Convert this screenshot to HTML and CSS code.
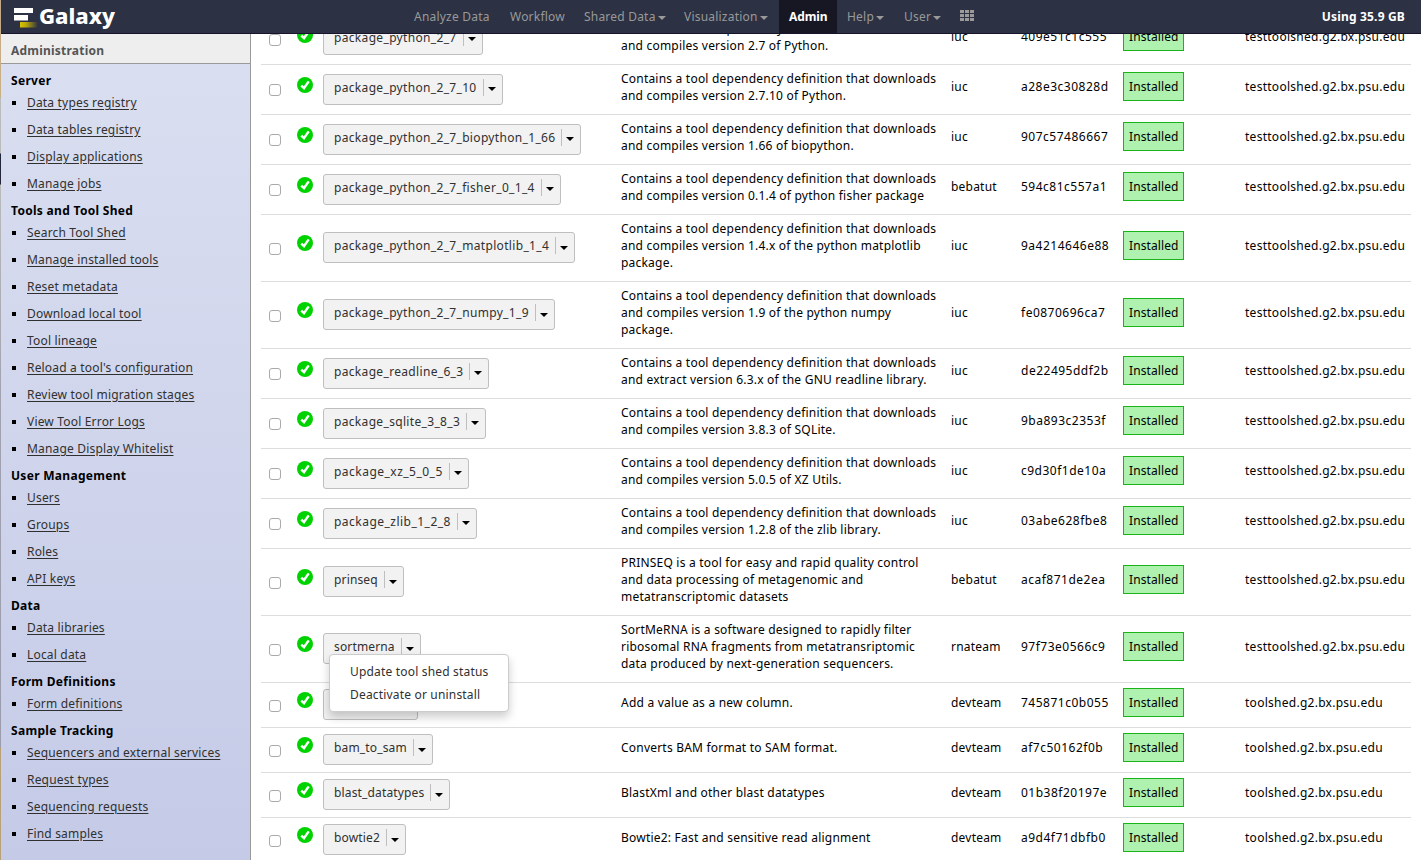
FILE: index.html
```html
<!DOCTYPE html>
<html lang="en">
<head>
<meta charset="utf-8">
<title>Galaxy</title>
<link rel="stylesheet" href="styles.css">
</head>
<body>
<svg class="defs" width="0" height="0">
  <symbol id="ok" viewBox="0 0 16 16"><circle cx="8" cy="8" r="8" fill="#00d200"/><path d="M4.3 8.6 7 11.2 11.7 4.4" fill="none" stroke="#fff" stroke-width="2.5"/></symbol>
</svg>
<header class="masthead">
  <div class="brand">
    <svg width="24" height="20" viewBox="0 0 24 20">
      <defs><linearGradient id="gold"><stop offset="0" stop-color="#d9c400"/><stop offset=".35" stop-color="#b8a60c"/><stop offset="1" stop-color="#2c3143"/></linearGradient></defs>
      <rect width="19" height="5" fill="#fff"/><rect y="7" width="14" height="5.500" fill="#fff"/><rect x="6" y="14" width="18" height="5.500" fill="url(#gold)"/>
    </svg>
    <span class="brand-name">Galaxy</span>
  </div>
  <nav class="nav">
    <a>Analyze Data</a><a>Workflow</a><a>Shared Data<i class="caret"></i></a><a>Visualization<i class="caret"></i></a><a class="active">Admin</a><a>Help<i class="caret"></i></a><a>User<i class="caret"></i></a>
    <a><svg width="14" height="11" viewBox="0 0 14 11" fill="#999"><path d="M0 0h4v3H0zM5 0h4v3H5zM10 0h4v3h-4zM0 4h4v3H0zM5 4h4v3H5zM10 4h4v3h-4zM0 8h4v3H0zM5 8h4v3H5zM10 8h4v3h-4z"/></svg></a>
  </nav>
  <div class="quota">Using 35.9 GB</div>
</header>
<div class="page">
  <aside class="sidebar">
    <div class="panel-head">Administration</div>
    <div class="panel-body">
      <h2>Server</h2>
      <ul><li><a>Data types registry</a></li><li><a>Data tables registry</a></li><li><a>Display applications</a></li><li><a>Manage jobs</a></li></ul>
      <h2>Tools and Tool Shed</h2>
      <ul><li><a>Search Tool Shed</a></li><li><a>Manage installed tools</a></li><li><a>Reset metadata</a></li><li><a>Download local tool</a></li><li><a>Tool lineage</a></li><li><a>Reload a tool's configuration</a></li><li><a>Review tool migration stages</a></li><li><a>View Tool Error Logs</a></li><li><a>Manage Display Whitelist</a></li></ul>
      <h2>User Management</h2>
      <ul><li><a>Users</a></li><li><a>Groups</a></li><li><a>Roles</a></li><li><a>API keys</a></li></ul>
      <h2>Data</h2>
      <ul><li><a>Data libraries</a></li><li><a>Local data</a></li></ul>
      <h2>Form Definitions</h2>
      <ul><li><a>Form definitions</a></li></ul>
      <h2>Sample Tracking</h2>
      <ul><li><a>Sequencers and external services</a></li><li><a>Request types</a></li><li><a>Sequencing requests</a></li><li><a>Find samples</a></li></ul>
    </div>
  </aside>
  <main class="grid">
    <div class="row"><i class="check"></i><svg class="ok"><use href="#ok"/></svg><div class="name"><span class="btn">package_python_2_7<i class="drop"></i></span></div><p>Contains a tool dependency definition that downloads<br>and compiles version 2.7 of Python.</p><span class="owner">iuc</span><span class="rev">409e51c1c555</span><span class="badge">Installed</span><span class="shed">testtoolshed.g2.bx.psu.edu</span></div>
    <div class="row"><i class="check"></i><svg class="ok"><use href="#ok"/></svg><div class="name"><span class="btn">package_python_2_7_10<i class="drop"></i></span></div><p>Contains a tool dependency definition that downloads<br>and compiles version 2.7.10 of Python.</p><span class="owner">iuc</span><span class="rev">a28e3c30828d</span><span class="badge">Installed</span><span class="shed">testtoolshed.g2.bx.psu.edu</span></div>
    <div class="row"><i class="check"></i><svg class="ok"><use href="#ok"/></svg><div class="name"><span class="btn">package_python_2_7_biopython_1_66<i class="drop"></i></span></div><p>Contains a tool dependency definition that downloads<br>and compiles version 1.66 of biopython.</p><span class="owner">iuc</span><span class="rev">907c57486667</span><span class="badge">Installed</span><span class="shed">testtoolshed.g2.bx.psu.edu</span></div>
    <div class="row"><i class="check"></i><svg class="ok"><use href="#ok"/></svg><div class="name"><span class="btn">package_python_2_7_fisher_0_1_4<i class="drop"></i></span></div><p>Contains a tool dependency definition that downloads<br>and compiles version 0.1.4 of python fisher package</p><span class="owner">bebatut</span><span class="rev">594c81c557a1</span><span class="badge">Installed</span><span class="shed">testtoolshed.g2.bx.psu.edu</span></div>
    <div class="row"><i class="check"></i><svg class="ok"><use href="#ok"/></svg><div class="name"><span class="btn">package_python_2_7_matplotlib_1_4<i class="drop"></i></span></div><p>Contains a tool dependency definition that downloads<br>and compiles version 1.4.x of the python matplotlib<br>package.</p><span class="owner">iuc</span><span class="rev">9a4214646e88</span><span class="badge">Installed</span><span class="shed">testtoolshed.g2.bx.psu.edu</span></div>
    <div class="row"><i class="check"></i><svg class="ok"><use href="#ok"/></svg><div class="name"><span class="btn">package_python_2_7_numpy_1_9<i class="drop"></i></span></div><p>Contains a tool dependency definition that downloads<br>and compiles version 1.9 of the python numpy<br>package.</p><span class="owner">iuc</span><span class="rev">fe0870696ca7</span><span class="badge">Installed</span><span class="shed">testtoolshed.g2.bx.psu.edu</span></div>
    <div class="row"><i class="check"></i><svg class="ok"><use href="#ok"/></svg><div class="name"><span class="btn">package_readline_6_3<i class="drop"></i></span></div><p>Contains a tool dependency definition that downloads<br>and extract version 6.3.x of the GNU readline library.</p><span class="owner">iuc</span><span class="rev">de22495ddf2b</span><span class="badge">Installed</span><span class="shed">testtoolshed.g2.bx.psu.edu</span></div>
    <div class="row"><i class="check"></i><svg class="ok"><use href="#ok"/></svg><div class="name"><span class="btn">package_sqlite_3_8_3<i class="drop"></i></span></div><p>Contains a tool dependency definition that downloads<br>and compiles version 3.8.3 of SQLite.</p><span class="owner">iuc</span><span class="rev">9ba893c2353f</span><span class="badge">Installed</span><span class="shed">testtoolshed.g2.bx.psu.edu</span></div>
    <div class="row"><i class="check"></i><svg class="ok"><use href="#ok"/></svg><div class="name"><span class="btn wide">package_xz_5_0_5<i class="drop"></i></span></div><p>Contains a tool dependency definition that downloads<br>and compiles version 5.0.5 of XZ Utils.</p><span class="owner">iuc</span><span class="rev">c9d30f1de10a</span><span class="badge">Installed</span><span class="shed">testtoolshed.g2.bx.psu.edu</span></div>
    <div class="row"><i class="check"></i><svg class="ok"><use href="#ok"/></svg><div class="name"><span class="btn wide">package_zlib_1_2_8<i class="drop"></i></span></div><p>Contains a tool dependency definition that downloads<br>and compiles version 1.2.8 of the zlib library.</p><span class="owner">iuc</span><span class="rev">03abe628fbe8</span><span class="badge">Installed</span><span class="shed">testtoolshed.g2.bx.psu.edu</span></div>
    <div class="row"><i class="check"></i><svg class="ok"><use href="#ok"/></svg><div class="name"><span class="btn tight">prinseq<i class="drop"></i></span></div><p>PRINSEQ is a tool for easy and rapid quality control<br>and data processing of metagenomic and<br>metatranscriptomic datasets</p><span class="owner">bebatut</span><span class="rev">acaf871de2ea</span><span class="badge">Installed</span><span class="shed">testtoolshed.g2.bx.psu.edu</span></div>
    <div class="row"><i class="check"></i><svg class="ok"><use href="#ok"/></svg><div class="name"><span class="btn tight">sortmerna<i class="drop"></i></span><div class="menu"><a>Update tool shed status</a><a>Deactivate or uninstall</a></div></div><p>SortMeRNA is a software designed to rapidly filter<br>ribosomal RNA fragments from metatransriptomic<br>data produced by next-generation sequencers.</p><span class="owner">rnateam</span><span class="rev">97f73e0566c9</span><span class="badge">Installed</span><span class="shed">testtoolshed.g2.bx.psu.edu</span></div>
    <div class="row"><i class="check"></i><svg class="ok"><use href="#ok"/></svg><div class="name"><span class="btn blank"><i class="drop"></i></span></div><p>Add a value as a new column.</p><span class="owner">devteam</span><span class="rev">745871c0b055</span><span class="badge">Installed</span><span class="shed">toolshed.g2.bx.psu.edu</span></div>
    <div class="row"><i class="check"></i><svg class="ok"><use href="#ok"/></svg><div class="name"><span class="btn tight">bam_to_sam<i class="drop"></i></span></div><p>Converts BAM format to SAM format.</p><span class="owner">devteam</span><span class="rev">af7c50162f0b</span><span class="badge">Installed</span><span class="shed">toolshed.g2.bx.psu.edu</span></div>
    <div class="row"><i class="check"></i><svg class="ok"><use href="#ok"/></svg><div class="name"><span class="btn tight">blast_datatypes<i class="drop"></i></span></div><p>BlastXml and other blast datatypes</p><span class="owner">devteam</span><span class="rev">01b38f20197e</span><span class="badge">Installed</span><span class="shed">toolshed.g2.bx.psu.edu</span></div>
    <div class="row"><i class="check"></i><svg class="ok"><use href="#ok"/></svg><div class="name"><span class="btn tight">bowtie2<i class="drop"></i></span></div><p>Bowtie2: Fast and sensitive read alignment</p><span class="owner">devteam</span><span class="rev">a9d4f71dbfb0</span><span class="badge">Installed</span><span class="shed">toolshed.g2.bx.psu.edu</span></div>
  </main>
</div>
</body>
</html>
```
FILE: styles.css
```css
* { box-sizing: border-box; }
body {
  margin: 0; height: 860px; overflow: hidden; padding-left: 1px;
  display: flex; flex-direction: column;
  font: 12px/17px "Noto Sans", "DejaVu Sans", sans-serif; letter-spacing: .21px; color: #000;
  background: linear-gradient(to right, transparent 1px, #fff 1px),
    linear-gradient(#c4a888 0, #c9b184 97px, #bbb 98px, #bbb 153px, #23263a 154px, #23263a 184px, #bbb 185px, #a0a2b0 400px, #9a9cae 747px, #b8a078 748px, #b8a078 860px);
}
.defs { position: absolute; }
.masthead { flex: none; height: 34px; display: flex; align-items: stretch; background: #2c3143; border-bottom: 1px solid #16132a; }
.brand { width: 403px; padding-left: 13px; display: flex; }
.brand svg { margin-top: 8px; }
.brand-name { margin-left: 1px; font-size: 22px; font-weight: 800; line-height: 31px; letter-spacing: 0; color: #fff; }
.nav { flex: 1; display: grid; grid-template-columns: 96px 74px 100px 105px 58px 57px 56px 40px; line-height: 33px; color: #999; }
.nav a { padding-left: 10px; white-space: nowrap; }
.nav svg { display: block; margin: 10px 0 0; }
.nav .active { background: #171723; color: #fff; font-weight: bold; letter-spacing: -.1px; }
.caret { display: inline-block; margin-left: 2px; vertical-align: 1px; border: 4px solid transparent; border-top-color: #999; border-bottom: 0; }
.quota { padding-right: 16px; line-height: 33px; font-weight: bold; color: #fff; letter-spacing: .17px; }
.page { flex: 1; min-height: 0; display: flex; overflow: hidden; }
.sidebar { width: 250px; border-right: 1px solid #999; display: flex; flex-direction: column; }
.panel-head { height: 30px; padding-left: 10px; line-height: 33px; background: #eee; border-bottom: 1px solid #999; color: #555; font-weight: bold; }
.panel-body { flex: 1; padding: 8px 10px 0; background: linear-gradient(#d9def0, #c5cbe7); }
h2 { margin: 0; height: 22px; font-size: 12px; font-weight: bold; line-height: 17px; letter-spacing: .3px; }
ul { margin: 0; padding: 0; list-style: none; color: #303030; }
li { height: 27px; display: flex; letter-spacing: .18px; }
li::before { content: ""; width: 4px; height: 4px; margin: 7px 11px 0 1px; background: #000; }
li a { text-decoration: underline; text-underline-offset: 2px; }
.grid { flex: 1; padding: 0 10px; margin-top: -19px; }
.row {
  display: grid; grid-template-columns: 36px 26px 298px 330px 70px 102px 122px 1fr; align-items: center;
  padding: 5px 0 10px; border-bottom: 1px solid #ddd; white-space: nowrap;
}
.row p { margin: 0; }
.check { width: 12px; height: 12px; margin: 6px 0 0 8px; border: 1px solid #aaa; border-radius: 3px; background: #fff; }
.ok { width: 16px; height: 16px; margin-bottom: 5px; }
.name { position: relative; height: 31px; margin: 1px 0 -3px; }
.btn { display: inline-flex; height: 31px; padding: 4px 6px 0 10px; border: 1px solid #bfbfbf; border-radius: 3px; background: #f2f2f2; line-height: 18px; letter-spacing: .33px; color: #303030; }
.btn.wide { letter-spacing: .48px; }
.btn.tight { letter-spacing: .15px; }
.btn.blank { width: 95px; justify-content: flex-end; }
.drop { width: 13px; height: 17px; margin-left: 6px; border-left: 1px solid #bfbfbf; display: flex; align-items: center; justify-content: flex-end; }
.drop::after { content: ""; border: 4px solid transparent; border-top-color: #000; border-bottom: 0; margin-top: 4px; }
.menu {
  position: absolute; left: 6px; top: 21px; z-index: 1; width: 180px; height: 58px; padding: 5px 0 0 20px;
  border: 1px solid #ccc; border-radius: 4px; background: #fff; box-shadow: 0 5px 10px rgba(0,0,0,.2); line-height: 23px; letter-spacing: .18px; color: #303030;
}
.menu a { display: block; }
.owner, .rev, .badge, .shed { margin: -.5px 0 .5px; }
.rev { letter-spacing: .5px; }
.badge { width: 61px; height: 29px; padding-left: 5px; border: 1px solid #1ab31a; background: #aff1af; line-height: 27px; letter-spacing: .1px; }
.shed { letter-spacing: .27px; }
```
